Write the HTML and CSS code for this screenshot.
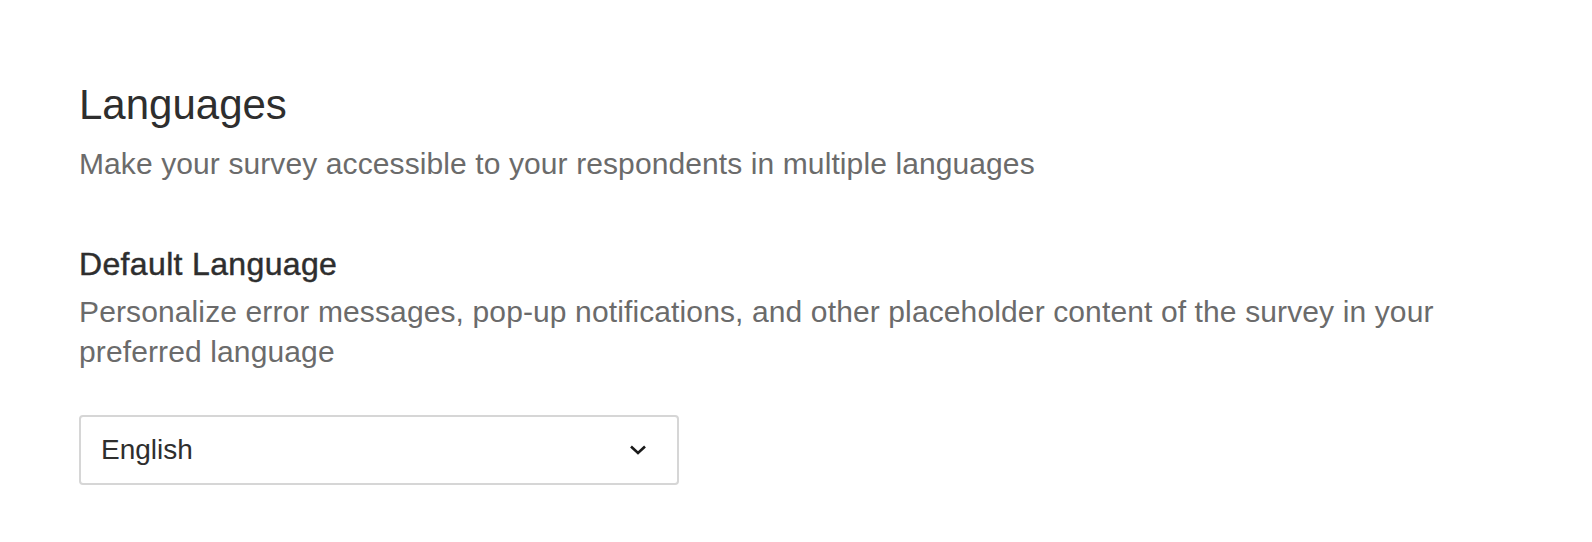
FILE: index.html
```html
<!DOCTYPE html>
<html lang="en">

<head>
  <meta charset="UTF-8">
  <title>Languages</title>
  <link rel="stylesheet" href="styles.css">
</head>

<body>
  <div class="settings">
    <div class="section">
      <h1 class="title">Languages</h1>
      <p class="subtitle">Make your survey accessible to your respondents in multiple languages</p>
    </div>

    <div class="field">
      <h2 class="label">Default Language</h2>
      <p class="help">Personalize error messages, pop-up notifications, and other placeholder content of the survey in your preferred language</p>

      <div class="select">
        <span class="value">English</span>
        <svg class="chevron" width="18" height="12" viewBox="0 0 18 12">
          <path d="M2 2.5 L9 9 L16 2.5" fill="none" stroke="#1a1a1a" stroke-width="2.6" />
        </svg>
      </div>
    </div>
  </div>
</body>

</html>
```

FILE: styles.css
```css
body {
  margin: 0;
  background-color: #fff;
  font-family: "Liberation Sans", Arial, sans-serif;
}

.settings {
  padding: 80px 79px 0 79px;
}

.title {
  margin: 0;
  font-size: 42px;
  line-height: 50px;
  font-weight: normal;
  color: #2e2e2e;
}

.subtitle {
  margin: 14px 0 0 0;
  font-size: 30px;
  line-height: 40px;
  letter-spacing: 0.1px;
  color: #6b6b6b;
}

.field {
  margin-top: 60px;
}

.label {
  margin: 0;
  font-size: 32px;
  line-height: 40px;
  font-weight: normal;
  letter-spacing: 0.35px;
  -webkit-text-stroke: 0.45px #2e2e2e;
  color: #2e2e2e;
}

.help {
  margin: 8px 0 0 0;
  font-size: 30px;
  line-height: 40px;
  letter-spacing: 0.12px;
  color: #6b6b6b;
}

.select {
  margin-top: 43px;
  width: 600px;
  height: 70px;
  box-sizing: border-box;
  border: 2px solid #d6d6d6;
  border-radius: 4px;
  padding: 0 30px 0 20px;
  display: flex;
  align-items: center;
  justify-content: space-between;
}

.value {
  font-size: 28px;
  color: #2e2e2e;
}

.chevron {
  display: block;
}
```
